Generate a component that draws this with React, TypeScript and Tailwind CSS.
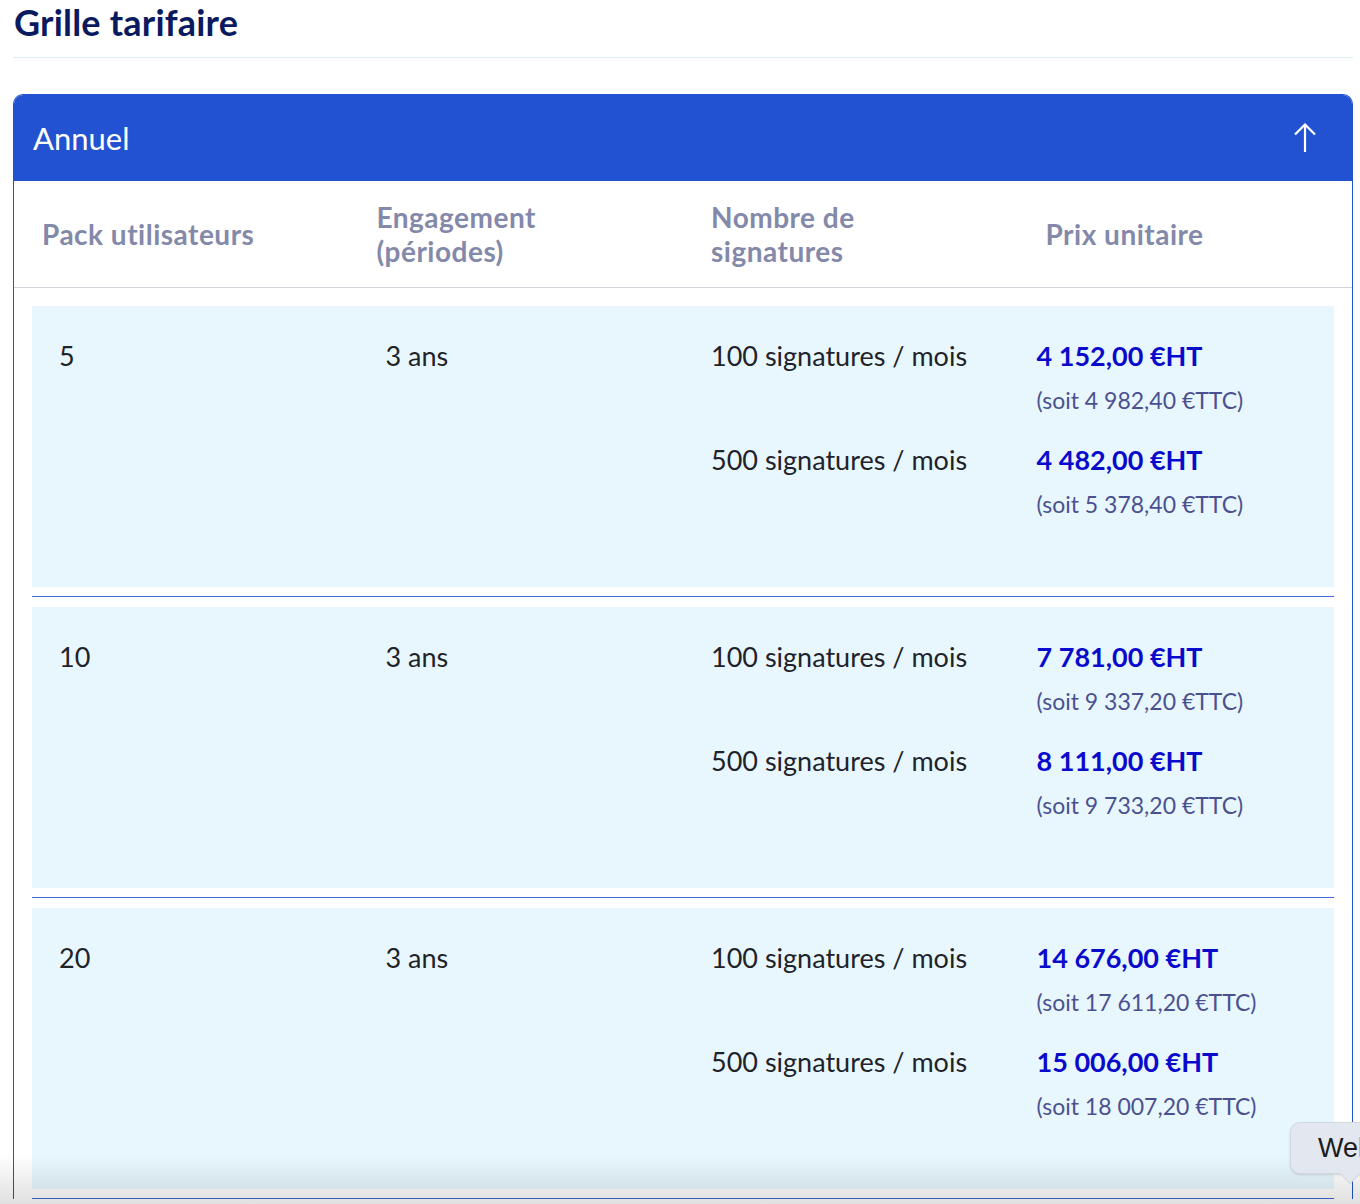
import React from 'react';

type Offer = { sig: string; ht: string; ttc: string };
type Row = { users: string; term: string; offers: Offer[] };

const rows: Row[] = [
  {
    users: '5',
    term: '3 ans',
    offers: [
      { sig: '100 signatures / mois', ht: '4 152,00 €HT', ttc: '(soit 4 982,40 €TTC)' },
      { sig: '500 signatures / mois', ht: '4 482,00 €HT', ttc: '(soit 5 378,40 €TTC)' },
    ],
  },
  {
    users: '10',
    term: '3 ans',
    offers: [
      { sig: '100 signatures / mois', ht: '7 781,00 €HT', ttc: '(soit 9 337,20 €TTC)' },
      { sig: '500 signatures / mois', ht: '8 111,00 €HT', ttc: '(soit 9 733,20 €TTC)' },
    ],
  },
  {
    users: '20',
    term: '3 ans',
    offers: [
      { sig: '100 signatures / mois', ht: '14 676,00 €HT', ttc: '(soit 17 611,20 €TTC)' },
      { sig: '500 signatures / mois', ht: '15 006,00 €HT', ttc: '(soit 18 007,20 €TTC)' },
    ],
  },
];

function ArrowUp() {
  return (
    <svg width="22" height="30" viewBox="0 0 22 30" fill="none" stroke="white" strokeWidth="2.2">
      <path d="M11 29V2" />
      <path d="M1 11.5 11 1.5 21 11.5" />
    </svg>
  );
}

export default function App() {
  return (
    <div className="relative h-[1204px] overflow-hidden bg-white pl-[13px] pr-[7px] font-['Lato',sans-serif] text-[#1f2329]">
      {/* Title + thin divider */}
      <div className="border-b border-[#d9eff3] pb-[13px]">
        <h1 className="pl-px text-[36px] font-bold leading-[44px] tracking-[0.2px] text-[#0a1a5e]">
          Grille tarifaire
        </h1>
      </div>

      {/* Accordion card */}
      <div className="mt-[36px] rounded-t-[10px] border-x border-t border-[#2252d1]">
        <div className="flex h-[86px] items-center justify-between rounded-t-[9px] bg-[#2252d1] pl-[19px] pr-[36px]">
          <span className="text-[31px] leading-none text-white">Annuel</span>
          <ArrowUp />
        </div>

        {/* Column headings */}
        <div className="grid h-[107px] grid-cols-4 items-center border-b border-[#d4d4dc] text-[28px] font-bold leading-[34px] tracking-[0.5px] text-[#8389a9]">
          <div className="px-[28px]">Pack utilisateurs</div>
          <div className="px-[28px]">
            Engagement
            <br />
            (périodes)
          </div>
          <div className="px-[28px]">
            Nombre de
            <br />
            signatures
          </div>
          <div className="px-[28px]">Prix unitaire</div>
        </div>

        {/* Rows */}
        <div className="px-[18px] pt-[18px]">
          {rows.map((r) => (
            <div key={r.users}>
              <div className="grid h-[281px] grid-cols-4 bg-[#e8f7fe] pt-[30px] text-[27px] leading-[39px]">
                <div className="px-[27px]">{r.users}</div>
                <div className="px-[28px]">{r.term}</div>
                <div className="col-span-2 flex flex-col gap-[23px]">
                  {r.offers.map((o) => (
                    <div key={o.sig} className="grid grid-cols-2">
                      <div className="px-[28px]">{o.sig}</div>
                      <div className="flex flex-col gap-[9px] px-[28px]">
                        <span className="font-bold text-[#0a0acd]">{o.ht}</span>
                        <span className="text-[23px] leading-[33px] text-[#4b5190]">{o.ttc}</span>
                      </div>
                    </div>
                  ))}
                </div>
              </div>
              <div className="mb-[10px] mt-[9px] h-px bg-[#3d68d6]" />
            </div>
          ))}
        </div>
      </div>

      {/* Bottom fade from the page */}
      <div className="pointer-events-none absolute bottom-0 left-0 right-0 h-[50px] bg-gradient-to-b from-transparent to-[#0000001f]" />

      {/* Chat bubble cut by the viewport */}
      <div className="absolute right-[-40px] top-[1122px] flex h-[52px] w-[110px] items-center rounded-[10px] border border-[#d2d8e0] bg-[#e3e8f0] pl-[27px] font-['Liberation_Sans',sans-serif] text-[27px] text-[#1c1c1c] shadow-sm">
        Welcome
        <span className="absolute bottom-[-8px] left-[52px] h-[14px] w-[14px] rotate-45 border-b border-r border-[#d2d8e0] bg-[#e3e8f0]" />
      </div>
    </div>
  );
}
